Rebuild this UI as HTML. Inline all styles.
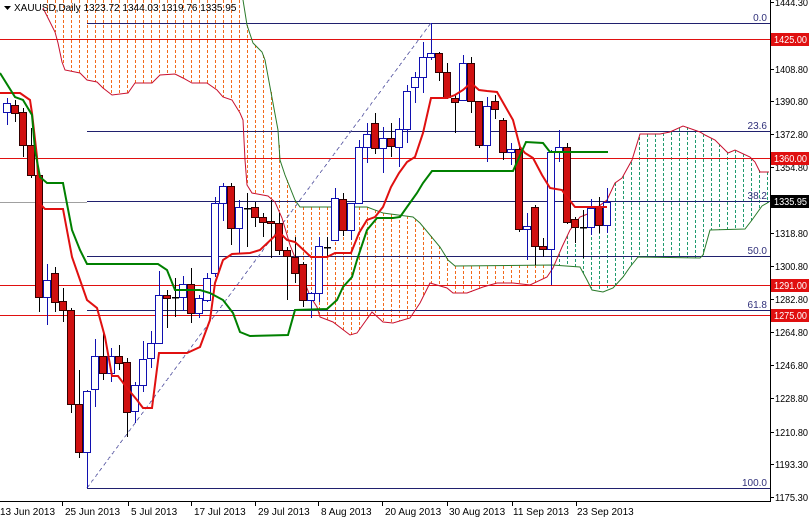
<!DOCTYPE html>
<html><head><meta charset="utf-8">
<style>
html,body{margin:0;padding:0;background:#fff;width:809px;height:518px;overflow:hidden}
svg{display:block}
text{font-family:"Liberation Sans",Tahoma,sans-serif;font-size:10px}
</style></head>
<body>
<svg id="c" width="809" height="518" viewBox="0 0 809 518" xmlns="http://www.w3.org/2000/svg"></svg>
<script>
var s=document.getElementById('c'),o='';
function L(x1,y1,x2,y2,c,w,d){o+='<line x1="'+x1+'" y1="'+y1+'" x2="'+x2+'" y2="'+y2+'" stroke="'+c+'" stroke-width="'+(w||1)+'"'+(d?' stroke-dasharray="'+d+'"':'')+' shape-rendering="crispEdges"/>';}
function P(pts,c,w,d){o+='<polyline fill="none" stroke="'+c+'" stroke-width="'+w+'"'+(d?' stroke-dasharray="'+d+'"':'')+' points="'+pts.map(function(p){return p.join(',')}).join(' ')+'"/>';}
function T(x,y,t,c,a,tl){o+='<text x="'+x+'" y="'+y+'" fill="'+c+'"'+(a?' text-anchor="'+a+'"':'')+(tl?' textLength="'+tl+'" lengthAdjust="spacingAndGlyphs"':'')+'>'+t+'</text>';}
function interp(pts,x){if(x<pts[0][0]||x>pts[pts.length-1][0])return null;for(var i=1;i<pts.length;i++){if(x<=pts[i][0]){var a=pts[i-1],b=pts[i];return a[1]+(b[1]-a[1])*(x-a[0])/((b[0]-a[0])||1);}}return null;}
var red=[[43,8],[55,32],[58,43],[62,62],[65,70],[80,73],[87,80],[97,82],[103,88],[112,95],[128,93],[135,83],[152,83],[160,75],[175,74],[183,78],[192,83],[207,83],[217,90],[223,97],[232,100],[240,113],[243,120],[245,160],[247,185],[252,193],[268,196],[275,202],[282,218],[290,245],[300,270],[310,296],[317,307],[320,317],[333,322],[350,335],[357,333],[372,312],[383,322],[393,323],[410,318],[420,303],[430,283],[447,288],[453,293],[467,293],[483,287],[497,283],[513,283],[530,285],[547,277],[553,268],[562,247],[570,230],[580,217],[590,213],[607,200],[615,183],[622,178],[632,160],[640,134],[660,134],[670,132],[683,126],[700,132],[705,135],[715,140],[728,153],[735,150],[750,157],[755,162],[760,172],[769,172]];
var grn=[[40,-50],[240,-50],[243,0],[247,25],[253,43],[262,52],[265,60],[278,130],[280,160],[285,175],[295,200],[300,207],[367,207],[383,213],[413,217],[420,223],[440,247],[448,260],[455,266],[552,265],[580,267],[587,280],[592,290],[603,292],[613,288],[623,277],[630,267],[638,257],[700,258],[703,255],[710,230],[745,229],[752,220],[762,206],[769,202]];
for(var x=7;x<770;x+=8){var r=interp(red,x),g=interp(grn,x);if(r===null||g===null)continue;var y1=Math.max(0,Math.round(Math.min(r,g))),y2=Math.round(Math.max(r,g));if(y2<=0)continue;var col=r>g?'#f26a1b':'#1f9a6e';for(var y=y1;y<y2;y+=5){o+='<rect x="'+x+'" y="'+y+'" width="1" height="'+Math.min(3,y2-y)+'" fill="'+col+'"/>';}}
L(0,202.5,87,202.5,'#a0a0a0');
[[23,'0.0'],[131,'23.6'],[201,'38.2'],[256,'50.0'],[310,'61.8'],[488,'100.0']].forEach(function(f){L(87,f[0]+0.5,770,f[0]+0.5,'#20206e');T(767,f[0]-2,f[1],'#30307a','end');});
[39,158,285,315].forEach(function(y){L(0,y+0.5,770,y+0.5,'#e01010');});
L(87.5,390,87.5,488,'#20206e');
L(87,488,431,23,'#7070b0',1,'4,3');
P(red,'#c8102e',1);P(grn,'#2a7a2a',1);
var C=[[112,103,98,125],[105,113,100,122],[112,145,108,157],[145,175,128,178],[175,297,172,312],[297,280,264,325],[273,302,267,312],[301,310,288,322],[310,404,308,413],[404,452,370,458],[452,391,391,488],[389,356,339,407],[356,373,332,380],[373,356,348,382],[356,363,345,370],[362,412,358,437],[411,385,382,423],[385,359,341,392],[358,343,331,368],[343,295,271,343],[295,298,290,328],[297,297,278,317],[297,284,276,311],[284,313,268,323],[313,298,295,318],[300,278,273,302],[273,203,197,277],[203,186,183,221],[186,228,183,245],[228,207,200,253],[208,208,193,247],[207,217,202,227],[217,222,213,237],[221,223,200,258],[223,250,213,255],[250,256,247,300],[257,273,237,283],[264,300,262,307],[300,293,292,318],[293,246,237,302],[247,247,237,257],[240,198,188,240],[199,230,193,236],[230,203,203,240],[203,147,140,203],[147,134,123,163],[123,148,113,154],[148,138,127,173],[138,146,123,157],[147,129,118,167],[129,91,85,143],[87,77,72,103],[77,57,42,93],[57,53,23,60],[53,72,52,81],[72,97,63,99],[98,102,95,133],[100,63,55,100],[63,101,57,113],[101,145,101,148],[145,106,97,162],[101,109,95,119],[120,152,118,160],[152,149,143,165],[149,229,146,232],[229,226,213,260],[207,246,205,265],[246,249,238,257],[249,152,150,285],[152,147,130,162],[147,222,143,224],[219,227,217,243],[227,227,210,258],[227,208,199,235],[207,225,197,233],[225,202,188,233]];
C.forEach(function(c,i){var x=7+8*i,bull=c[1]<c[0],t=Math.min(c[0],c[1]),b=Math.max(c[0],c[1]);var col=bull?'#1010b0':'#000';L(x+0.5,c[2],x+0.5,c[3],col);if(b-t<1.5){L(x-3,t+0.5,x+4,t+0.5,col,1.5);}else if(bull){o+='<rect x="'+(x-3.5)+'" y="'+(t+0.5)+'" width="7" height="'+(b-t)+'" fill="#fff" stroke="#1010b0" shape-rendering="crispEdges"/>';}else{o+='<rect x="'+(x-3.5)+'" y="'+(t+0.5)+'" width="7" height="'+(b-t)+'" fill="#d01010" stroke="#300" shape-rendering="crispEdges"/>';}});
P([[0,93],[20,93],[30,100],[32,113],[37,157],[39,203],[45,209],[63,209],[72,257],[87,300],[97,308],[105,337],[112,376],[118,376],[127,388],[137,400],[143,408],[152,408],[159,353],[187,353],[200,347],[210,320],[215,283],[223,260],[232,254],[250,253],[260,250],[279,232],[287,240],[295,242],[311,257],[327,257],[335,253],[351,253],[359,233],[367,220],[375,217],[383,207],[391,187],[399,173],[407,162],[415,157],[423,133],[431,98],[447,98],[455,95],[463,90],[471,83],[479,90],[487,91],[497,92],[513,120],[520,147],[525,153],[533,158],[542,175],[550,188],[562,190],[567,197],[575,207],[607,207]],'#e01010',2);
P([[0,73],[15,97],[23,100],[32,115],[35,150],[40,177],[47,183],[63,183],[72,230],[80,250],[87,264],[158,264],[167,270],[175,290],[200,290],[210,293],[223,300],[233,313],[240,332],[250,336],[288,335],[295,310],[327,309],[337,300],[343,287],[352,277],[357,260],[367,230],[377,218],[393,218],[400,217],[407,207],[417,193],[423,183],[432,171],[513,171],[526,142],[543,143],[550,152],[608,152]],'#008000',2);
L(770.5,0,770.5,501,'#000');L(0,501.5,771,501.5,'#000');
[[1444.30,2],[1408.80,69],[1390.80,101],[1372.80,134],[1354.80,167],[1318.80,233],[1300.80,266],[1282.80,299],[1264.80,332],[1246.80,365],[1228.80,398],[1210.80,432],[1193.30,464],[1175.30,497]].forEach(function(p){L(770,p[1]+0.5,774,p[1]+0.5,'#000');T(775,p[1]+4,p[0].toFixed(2),'#000',null,33);});
[[39,'1425.00','#e01010'],[158,'1360.00','#e01010'],[201,'1335.95','#000'],[285,'1291.00','#e01010'],[315,'1275.00','#e01010']].forEach(function(p){o+='<rect x="771" y="'+(p[0]-6)+'" width="38" height="13" fill="'+p[2]+'"/>';T(774,p[0]+4,p[1],'#fff',null,33);});
[[-2,'13 Jun 2013',-99],[63,'25 Jun 2013',62],[129,'5 Jul 2013',128],[192,'17 Jul 2013',191],[256,'29 Jul 2013',255],[319,'8 Aug 2013',318],[383,'20 Aug 2013',382],[447,'30 Aug 2013',447],[511,'11 Sep 2013',512],[575,'23 Sep 2013',576]].forEach(function(d){if(d[2]>0)L(d[2]+0.5,501,d[2]+0.5,506,'#000');T(d[0]+2,515,d[1],'#000');});
o+='<polygon points="4,6 11,6 7.5,10" fill="#000"/>';
T(14,11,'XAUUSD,Daily  1323.72 1344.03 1319.76 1335.95','#000');
s.innerHTML=o;
</script>
</body></html>
